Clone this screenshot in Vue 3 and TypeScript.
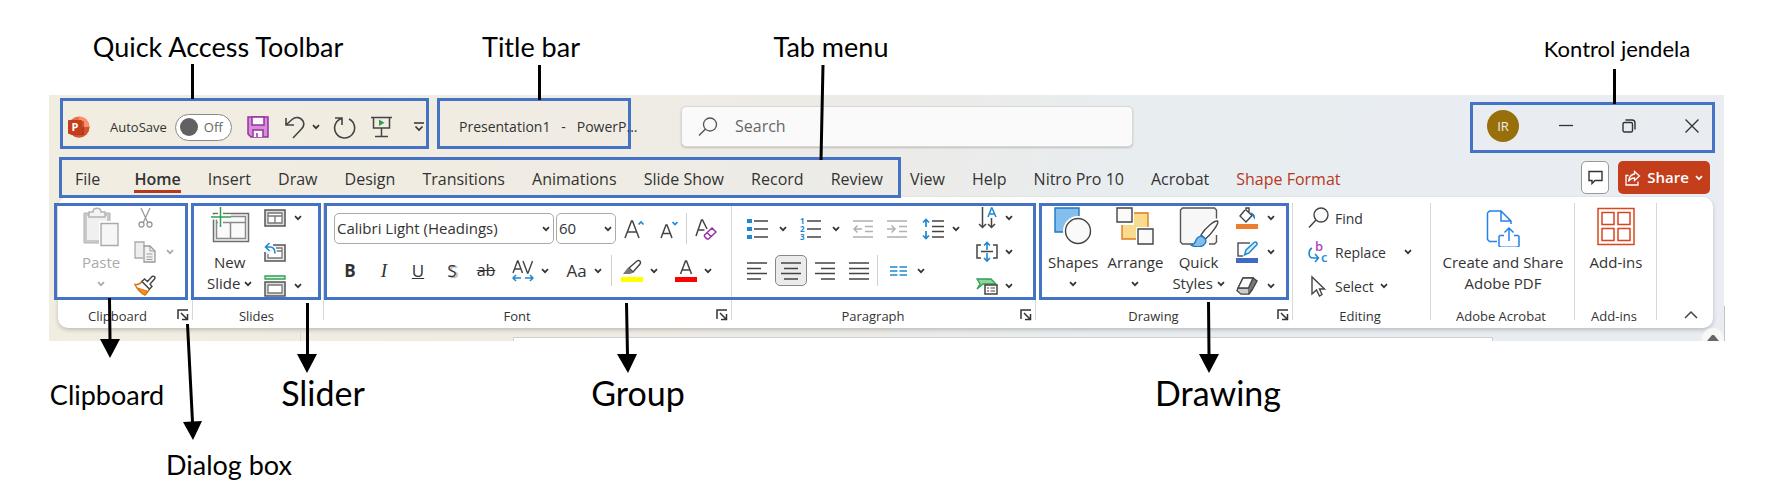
<script setup lang="ts">
import { h, ref } from 'vue'

interface Callout {
  text: string
  x: number
  y: number
  size: 's' | 'm' | 'l'
}

const markedTabs = ['File', 'Home', 'Insert', 'Draw', 'Design', 'Transitions', 'Animations', 'Slide Show', 'Record', 'Review']
const otherTabs = ['View', 'Help', 'Nitro Pro 10', 'Acrobat', 'Shape Format']
const activeTab = ref('Home')

const autoSave = ref(false)
const query = ref('')
const fontName = ref('Calibri Light (Headings)')
const fontSize = ref('60')

const callouts: Callout[] = [
  { text: 'Quick Access Toolbar', x: 218, y: 47, size: 'm' },
  { text: 'Title bar', x: 531, y: 47, size: 'm' },
  { text: 'Tab menu', x: 831, y: 47, size: 'm' },
  { text: 'Kontrol jendela', x: 1617, y: 49, size: 's' },
  { text: 'Clipboard', x: 107, y: 395, size: 'm' },
  { text: 'Slider', x: 323, y: 393, size: 'l' },
  { text: 'Group', x: 638, y: 393, size: 'l' },
  { text: 'Drawing', x: 1218, y: 393, size: 'l' },
  { text: 'Dialog box', x: 229, y: 465, size: 'm' },
]

const Chevron = () =>
  h('svg', { class: 'chev', width: 8, height: 6, viewBox: '0 0 8 6', 'aria-hidden': 'true' }, [
    h('path', { d: 'M1 1.2 4 4.2 7 1.2', fill: 'none', stroke: 'currentColor', 'stroke-width': 1.7 }),
  ])

const Launcher = () =>
  h('button', { class: 'launcher', type: 'button', 'aria-label': 'Dialog box launcher' }, [
    h('svg', { width: 12, height: 12, viewBox: '0 0 12 12' }, [
      h('path', { d: 'M1 10V1h10M4 4l6 6M10.500 5v5.500H5', fill: 'none', stroke: '#333', 'stroke-width': 1.5 }),
    ]),
  ])
</script>

<template>
  <main class="page">
    <section class="window">
      <header class="titlebar">
        <div class="frame qat">
          <svg class="logo" width="22" height="22" viewBox="0 0 22 22" aria-hidden="true">
            <circle cx="11" cy="11" r="10.500" fill="#ed6c47" />
            <path d="M11 .5A10.500 10.500 0 0 1 21.500 11H11z" fill="#ff8f6b" />
            <path d="M.5 11h21a10.500 10.500 0 0 1-21 0z" fill="#d35230" />
            <rect x="2" y="5" width="14" height="14" rx="1" fill="#9a2d14" opacity=".6" />
            <rect x="0" y="4" width="14" height="14" rx="1" fill="#c43e1c" />
            <text x="3.500" y="15" class="logo-letter">P</text>
          </svg>
          <label class="autosave">
            <span>AutoSave</span>
            <span class="toggle">
              <input v-model="autoSave" type="checkbox" />
              <span class="knob"></span>
              <span class="state">Off</span>
            </span>
          </label>
          <button type="button" class="bare save" aria-label="Save">
            <svg width="22" height="22" viewBox="0 0 22 22">
              <path d="M1 1h20v20H4l-3-3z" fill="#d48fd6" stroke="#9a2fa5" stroke-width="1.500" />
              <path d="M5 1h12v8H5zM6 21v-7h10v7" fill="#fafafa" stroke="#9a2fa5" stroke-width="1.500" />
              <path d="M10 17v4" stroke="#9a2fa5" stroke-width="1.500" />
            </svg>
          </button>
          <button type="button" class="bare undo" aria-label="Undo">
            <svg width="22" height="23" viewBox="0 0 22 23">
              <path d="M2 2v7h8M2 9l6-5.500c4-3.500 9-2 11 1.500 1.500 3 .5 6-1.500 8L9 22" fill="none" stroke="#444" stroke-width="1.600" />
            </svg>
            <Chevron />
          </button>
          <button type="button" class="bare redo" aria-label="Repeat">
            <svg width="23" height="23" viewBox="0 0 23 23">
              <path d="M2 2h7v7M8.500 2.500A10 10 0 1 0 16 3" fill="none" stroke="#444" stroke-width="1.600" />
            </svg>
          </button>
          <button type="button" class="bare show" aria-label="Start from beginning">
            <svg width="21" height="22" viewBox="0 0 21 22">
              <path d="M0 1.500h21M2.500 2v10h16V2M10.500 12v8M4 20.500h13" fill="none" stroke="#444" stroke-width="1.500" />
              <path d="M8 3.500v6.500l5.500-3.200z" fill="#2ea052" />
            </svg>
          </button>
          <button type="button" class="bare custom" aria-label="Customize Quick Access Toolbar">
            <svg width="10" height="10" viewBox="0 0 10 10">
              <path d="M0 1h10M1.500 4.500 5 8l3.500-3.500" fill="none" stroke="#333" stroke-width="1.600" />
            </svg>
          </button>
        </div>

        <div class="frame doc-title"><span>Presentation1&nbsp;&nbsp; -&nbsp;&nbsp; PowerP...</span></div>

        <label class="search">
          <svg width="20" height="20" viewBox="0 0 20 20" aria-hidden="true">
            <circle cx="12" cy="7.500" r="6.500" fill="none" stroke="#555" stroke-width="1.300" />
            <path d="M7.500 12 1 18.500" stroke="#555" stroke-width="1.400" />
          </svg>
          <input v-model="query" type="text" placeholder="Search" aria-label="Search" />
        </label>

        <div class="frame controls">
          <button type="button" class="avatar" aria-label="Account">IR</button>
          <button type="button" class="bare" aria-label="Minimize">
            <svg width="14" height="14" viewBox="0 0 14 14"><path d="M0 6.500h14" stroke="#333" stroke-width="1.300" /></svg>
          </button>
          <button type="button" class="bare" aria-label="Restore">
            <svg width="14" height="14" viewBox="0 0 14 14">
              <rect x="1" y="3.500" width="9.500" height="9.500" rx="1.500" fill="none" stroke="#333" stroke-width="1.400" />
              <path d="M3.500 1H10a3 3 0 0 1 3 3v6.500" fill="none" stroke="#333" stroke-width="1.400" />
            </svg>
          </button>
          <button type="button" class="bare" aria-label="Close">
            <svg width="14" height="14" viewBox="0 0 14 14"><path d="M.5.5l13 13M13.500.5l-13 13" stroke="#333" stroke-width="1.400" /></svg>
          </button>
        </div>
      </header>

      <nav class="tabs">
        <div class="frame tabset">
          <button
            v-for="tab in markedTabs"
            :key="tab"
            type="button"
            class="tab"
            :class="{ active: tab === activeTab }"
            @click="activeTab = tab"
          ><span>{{ tab }}</span></button>
        </div>
        <button
          v-for="tab in otherTabs"
          :key="tab"
          type="button"
          class="tab"
          :class="{ active: tab === activeTab, context: tab === 'Shape Format' }"
          @click="activeTab = tab"
        ><span>{{ tab }}</span></button>
        <div class="tab-actions">
          <button type="button" class="comment" aria-label="Comments">
            <svg width="15" height="15" viewBox="0 0 15 15">
              <path d="M1 1.500h13v9H7L4 13.500v-3H1z" fill="none" stroke="#333" stroke-width="1.400" />
            </svg>
          </button>
          <button type="button" class="share">
            <svg width="16" height="16" viewBox="0 0 16 16" aria-hidden="true">
              <path d="M3.500 5.500H1V15h12v-3.500M9.500 1.500 14.500 6l-5 4.500V8C7 8 5 9 3.500 11.500 4 7 6.500 4.500 9.500 4z" fill="none" stroke="#fff" stroke-width="1.300" />
            </svg>
            <span>Share</span>
            <Chevron />
          </button>
        </div>
      </nav>

      <div class="ribbon">
        <section class="group clipboard marked">
          <div class="body">
            <button type="button" class="large off">
              <svg width="38" height="40" viewBox="0 0 38 40" aria-hidden="true">
                <path d="M2 6h26v30H2z" fill="#c9c9c9" stroke="#b3b3b3" />
                <path d="M5 9h20v24H5z" fill="#f0f0f0" />
                <path d="M7 10V5h4c0-5 8-5 8 0h4v5z" fill="#f3f3f3" stroke="#b3b3b3" stroke-width="1.400" />
                <path d="M17 14h20v26H17z" fill="#fff" />
                <path d="M19 16.500h17v22H19z" fill="#f6f6f6" stroke="#aaa" stroke-width="1.400" />
              </svg>
              <span>Paste</span>
              <span><Chevron /></span>
            </button>
            <div class="stack">
              <button type="button" class="item off" aria-label="Cut">
                <svg width="22" height="22" viewBox="0 0 22 22">
                  <path d="M7 1l6.500 14M16 1 9.500 15" fill="none" stroke="#999" stroke-width="1.300" />
                  <circle cx="7.500" cy="17.500" r="2.500" fill="none" stroke="#999" stroke-width="1.300" />
                  <circle cx="15.500" cy="17.500" r="2.500" fill="none" stroke="#999" stroke-width="1.300" />
                </svg>
              </button>
              <button type="button" class="item off" aria-label="Copy">
                <svg width="22" height="22" viewBox="0 0 22 22">
                  <path d="M9 17H1V1h9v4" fill="#eee" stroke="#aaa" stroke-width="1.300" />
                  <path d="M10 5h6l5 5v11H10z" fill="#f3f3f3" stroke="#999" stroke-width="1.300" />
                  <path d="M16 5v5h5M12.500 13h6M12.500 16h6M12.500 18.500h6" fill="none" stroke="#999" />
                </svg>
                <Chevron />
              </button>
              <button type="button" class="item" aria-label="Format Painter">
                <svg width="22" height="22" viewBox="0 0 22 22">
                  <path d="M1 9.500c3 .5 5-.5 7-3L15.500 14c-2 3-3 4.500-4.500 6C7 18 3 14 1 9.500z" fill="#fff" stroke="#d9730d" stroke-width="1.400" />
                  <path d="M3.500 13 13 16c-1 2-1.500 3-2.500 4-3-1.500-5-4-7-7z" fill="#f7941d" stroke="#d9730d" />
                  <path d="M8 6.500 10.500 4l3 2.500L18 1.500c2-1 4 1 2.500 2.500L16 9l2 2.500L15.500 14z" fill="#fff" stroke="#444" stroke-width="1.400" />
                </svg>
              </button>
            </div>
          </div>
          <footer><span>Clipboard</span><Launcher /></footer>
        </section>

        <section class="group slides marked">
          <div class="body">
            <button type="button" class="large">
              <svg width="40" height="40" viewBox="0 0 40 40" aria-hidden="true">
                <path d="M3.500 6.500h35v28h-35z" fill="#f4f4f4" stroke="#6e6e6e" stroke-width="1.500" />
                <path d="M6.500 9.500h29v22h-29zM6.500 15.500h29M20.500 15.500v16" fill="#fafafa" stroke="#8a8a8a" stroke-width="1.500" />
                <path d="M10.500 0v20M1 10h20" stroke="#fff" stroke-width="5" />
                <path d="M10.500 0v20M1 10h20" stroke="#2ea052" stroke-width="1.500" />
              </svg>
              <span>New</span>
              <span>Slide <Chevron /></span>
            </button>
            <div class="stack">
              <button type="button" class="item" aria-label="Layout">
                <svg width="22" height="18" viewBox="0 0 22 18">
                  <path d="M1 1h20v16H1z" fill="#ddd" stroke="#555" stroke-width="1.500" />
                  <path d="M4 4h14v10H4zM4 7h14M11 7v7" fill="#fff" stroke="#777" stroke-width="1.300" />
                </svg>
                <Chevron />
              </button>
              <button type="button" class="item" aria-label="Reset">
                <svg width="22" height="20" viewBox="0 0 22 20">
                  <path d="M9 3h12v16H1v-9" fill="#eee" stroke="#555" stroke-width="1.500" />
                  <path d="M12 6h6v10H4v-4M12 9h6" fill="#fff" stroke="#777" stroke-width="1.300" />
                  <path d="M5.500 1 1.500 5l4 4M2 5h4c4 0 5 3 5 6.500" fill="none" stroke="#fff" stroke-width="4" />
                  <path d="M5.500 1 1.500 5l4 4M2 5h4c4 0 5 3 5 6.500" fill="none" stroke="#1e88d2" stroke-width="1.600" />
                </svg>
              </button>
              <button type="button" class="item" aria-label="Section">
                <svg width="22" height="22" viewBox="0 0 22 22">
                  <path d="M1 1h20v3H1z" fill="#d9f2de" stroke="#2ea052" stroke-width="1.300" />
                  <path d="M1 7h20v14H1z" fill="#ddd" stroke="#555" stroke-width="1.500" />
                  <path d="M4 10h14v8H4z" fill="#fff" stroke="#777" stroke-width="1.300" />
                </svg>
                <Chevron />
              </button>
            </div>
          </div>
          <footer><span>Slides</span></footer>
        </section>

        <div class="span marked">
          <section class="group font">
            <div class="rows">
              <div class="row">
                <span class="combo name">
                  <select v-model="fontName" aria-label="Font"><option>Calibri Light (Headings)</option></select>
                  <Chevron />
                </span>
                <span class="combo size">
                  <select v-model="fontSize" aria-label="Font size"><option>60</option></select>
                  <Chevron />
                </span>
                <button type="button" class="tool" aria-label="Increase Font Size">
                  <svg width="22" height="22" viewBox="0 0 22 22">
                    <path d="M1 20 7.500 3h1L15 20M3.500 14h9" fill="none" stroke="#444" stroke-width="1.500" />
                    <path d="M14.500 6.500l2.500-2.500 2.500 2.500" fill="none" stroke="#1e88d2" stroke-width="1.700" />
                  </svg>
                </button>
                <button type="button" class="tool" aria-label="Decrease Font Size">
                  <svg width="22" height="22" viewBox="0 0 22 22">
                    <path d="M3 20 8 7h1l5 13M5 15.500h7" fill="none" stroke="#444" stroke-width="1.500" />
                    <path d="M14.500 4l2.500 2.500L19.500 4" fill="none" stroke="#1e88d2" stroke-width="1.700" />
                  </svg>
                </button>
                <i class="rule"></i>
                <button type="button" class="tool" aria-label="Clear All Formatting">
                  <svg width="22" height="22" viewBox="0 0 22 22">
                    <path d="M1 18 6.500 2h1l4.500 9M3.500 12h6" fill="none" stroke="#444" stroke-width="1.500" />
                    <path d="M9.500 17l7.500-7 4 4-7.500 7h-1.500L9.500 18.500zM12 14.500l4 4" fill="#fff" stroke="#9a2fa5" stroke-width="1.500" />
                  </svg>
                </button>
              </div>
              <div class="row">
                <button type="button" class="tool letter"><b>B</b></button>
                <button type="button" class="tool letter"><em>I</em></button>
                <button type="button" class="tool letter"><u>U</u></button>
                <button type="button" class="tool letter shadow">S</button>
                <button type="button" class="tool letter"><s>ab</s></button>
                <button type="button" class="tool drop" aria-label="Character Spacing">
                  <svg width="22" height="24" viewBox="0 0 22 24">
                    <path d="M1 14 5.500 2h.5l4.500 12M2.500 10h6.500M11 2l4.500 12h.5L20.500 2" fill="none" stroke="#444" stroke-width="1.400" />
                    <path d="M4 16 1 19l3 3M1 19h8M18 16l3 3-3 3M21 19h-8" fill="none" stroke="#1e88d2" stroke-width="1.500" />
                  </svg>
                  <Chevron />
                </button>
                <button type="button" class="tool drop case"><span>Aa</span><Chevron /></button>
                <i class="rule"></i>
                <button type="button" class="tool drop" aria-label="Text Highlight Color">
                  <svg width="22" height="23" viewBox="0 0 22 23">
                    <path d="M8 9l8-7c2-1.500 4.500.5 3 3l-7 8z" fill="#fff" stroke="#444" stroke-width="1.400" />
                    <path d="M7 8.500l5.500 5L9 15H2z" fill="#777" />
                    <path d="M0 18h22v5H0z" fill="#ff0" />
                  </svg>
                  <Chevron />
                </button>
                <button type="button" class="tool drop" aria-label="Font Color">
                  <svg width="22" height="23" viewBox="0 0 22 23">
                    <path d="M5.500 15 10.500 2h1l5 13M7.500 11h7" fill="none" stroke="#444" stroke-width="1.500" />
                    <path d="M0 18h22v5H0z" fill="#f00" />
                  </svg>
                  <Chevron />
                </button>
              </div>
            </div>
            <footer><span>Font</span><Launcher /></footer>
          </section>

          <section class="group paragraph">
            <div class="body">
              <div class="rows">
                <div class="row">
                  <button type="button" class="tool drop list" aria-label="Bullets">
                    <svg width="22" height="22" viewBox="0 0 22 22">
                      <path d="M0 1h5v4H0zM0 9h5v4H0zM0 17h5v4H0z" fill="#1e88d2" />
                      <path d="M7 3h14M7 11h14M7 19h14" stroke="#444" stroke-width="1.500" />
                    </svg>
                    <Chevron />
                  </button>
                  <button type="button" class="tool drop list" aria-label="Numbering">
                    <svg width="22" height="22" viewBox="0 0 22 22">
                      <text x="0" y="6" class="num">1</text>
                      <text x="0" y="14" class="num">2</text>
                      <text x="0" y="22" class="num">3</text>
                      <path d="M7 3h14M7 11h14M7 19h14" stroke="#444" stroke-width="1.500" />
                    </svg>
                    <Chevron />
                  </button>
                  <button type="button" class="tool" aria-label="Decrease List Level">
                    <svg width="20" height="20" viewBox="0 0 20 20">
                      <path d="M0 2h20M12 7.500h8M12 12.500h8M0 18h20M9 10H1M4.500 6.500 1 10l3.500 3.500" fill="none" stroke="#b0b0b0" stroke-width="1.500" />
                    </svg>
                  </button>
                  <button type="button" class="tool" aria-label="Increase List Level">
                    <svg width="20" height="20" viewBox="0 0 20 20">
                      <path d="M0 2h20M12 7.500h8M12 12.500h8M0 18h20M0 10h8M4.500 6.500 8 10l-3.500 3.500" fill="none" stroke="#b0b0b0" stroke-width="1.500" />
                    </svg>
                  </button>
                  <button type="button" class="tool drop spacing" aria-label="Line Spacing">
                    <svg width="22" height="22" viewBox="0 0 22 22">
                      <path d="M4 1v8M1 4.500l3-3 3 3M4 21v-8M1 17.500l3 3 3-3" fill="none" stroke="#1e88d2" stroke-width="1.700" />
                      <path d="M10 3h12M10 8.500h12M10 13.500h12M10 19h12" stroke="#444" stroke-width="1.500" />
                    </svg>
                    <Chevron />
                  </button>
                </div>
                <div class="row">
                  <button type="button" class="tool" aria-label="Align Left">
                    <svg width="20" height="20" viewBox="0 0 20 20"><path d="M0 2h20M0 7.500h14M0 12.500h20M0 18h14" stroke="#444" stroke-width="1.500" /></svg>
                  </button>
                  <button type="button" class="tool pressed" aria-label="Center" aria-pressed="true">
                    <svg width="20" height="20" viewBox="0 0 20 20"><path d="M0 2h20M3 7.500h14M0 12.500h20M3 18h14" stroke="#444" stroke-width="1.500" /></svg>
                  </button>
                  <button type="button" class="tool" aria-label="Align Right">
                    <svg width="20" height="20" viewBox="0 0 20 20"><path d="M0 2h20M6 7.500h14M0 12.500h20M6 18h14" stroke="#444" stroke-width="1.500" /></svg>
                  </button>
                  <button type="button" class="tool" aria-label="Justify">
                    <svg width="20" height="20" viewBox="0 0 20 20"><path d="M0 2h20M0 7.500h20M0 12.500h20M0 18h20" stroke="#444" stroke-width="1.500" /></svg>
                  </button>
                  <i class="rule"></i>
                  <button type="button" class="tool drop columns" aria-label="Columns">
                    <svg width="17" height="12" viewBox="0 0 17 12"><path d="M0 2h7.500M0 6h7.500M0 10h7.500M9.500 2H17M9.500 6H17M9.500 10H17" stroke="#1e88d2" stroke-width="1.500" /></svg>
                    <Chevron />
                  </button>
                </div>
              </div>
              <div class="stack">
                <button type="button" class="item" aria-label="Text Direction">
                  <svg width="22" height="22" viewBox="0 0 22 22">
                    <path d="M6.500 0v20M3 17l3.500 3.500L10 17M15.500 11v9M12 17l3.500 3.500L19 17" fill="none" stroke="#444" stroke-width="1.500" />
                    <path d="M12 10 15.500 1h.5l4 9M13 7h6" fill="none" stroke="#1e88d2" stroke-width="1.500" />
                  </svg>
                  <Chevron />
                </button>
                <button type="button" class="item" aria-label="Align Text">
                  <svg width="22" height="22" viewBox="0 0 22 22">
                    <path d="M5 4H1v13h4M17 4h4v13h-4M5 10.500h12" fill="none" stroke="#444" stroke-width="1.500" />
                    <path d="M11 9V2M8 4.500l3-3 3 3M11 12v8M8 17l3 3 3-3" fill="none" stroke="#1e88d2" stroke-width="1.600" />
                  </svg>
                  <Chevron />
                </button>
                <button type="button" class="item" aria-label="Convert to SmartArt">
                  <svg width="22" height="20" viewBox="0 0 22 20">
                    <path d="M1 3h14l5 5H7l-6 5 3-5z" fill="#8fd49c" stroke="#2ea052" stroke-width="1.300" />
                    <path d="M9 9h12v9H9z" fill="#fff" stroke="#444" stroke-width="1.500" />
                    <path d="M11 12h2M14.500 12H19M11 15h2M14.500 15H19" stroke="#444" />
                  </svg>
                  <Chevron />
                </button>
              </div>
            </div>
            <footer><span>Paragraph</span><Launcher /></footer>
          </section>
        </div>

        <section class="group drawing marked">
          <div class="body">
            <button type="button" class="large">
              <svg width="38" height="40" viewBox="0 0 38 40" aria-hidden="true">
                <path d="M1 1h24v24H1z" fill="#83beec" stroke="#1e78c2" stroke-width="1.400" />
                <circle cx="24" cy="24" r="15" fill="#fff" />
                <circle cx="24" cy="24" r="12.500" fill="#fafafa" stroke="#444" stroke-width="1.400" />
              </svg>
              <span>Shapes</span>
              <span><Chevron /></span>
            </button>
            <button type="button" class="large">
              <svg width="38" height="40" viewBox="0 0 38 40" aria-hidden="true">
                <path d="M6 6h26v26H6z" fill="#f8db8f" stroke="#e07b1a" stroke-width="1.400" />
                <path d="M0 0h18v18H0zM20 20h18v19H20z" fill="#fff" />
                <path d="M1 1h15v14H1zM22 22h15v15H22z" fill="#fafafa" stroke="#444" stroke-width="1.400" />
              </svg>
              <span>Arrange</span>
              <span><Chevron /></span>
            </button>
            <button type="button" class="large">
              <svg width="40" height="40" viewBox="0 0 40 40" aria-hidden="true">
                <path d="M2 1h35v36H2z" fill="#f7f7f7" />
                <path d="M14 37H3.500L1.500 35V3l2-2h32l2 2v10M37.500 28v7l-2 2H30" fill="none" stroke="#555" stroke-width="1.400" />
                <path d="M22 28C26 21 35 13.500 38.500 14c2 2-6 13-12 18z" fill="#fff" stroke="#fff" stroke-width="5" />
                <path d="M22 28C26 21 35 13.500 38.500 14c2 2-6 13-12 18z" fill="#fff" stroke="#444" stroke-width="1.400" />
                <path d="M12 38c3 0 4-2 5-5 1.500-4 6-5 8.500-2 3 3 .5 7.500-4 8.500-3 .5-7 .5-9.500-1.500z" fill="#83beec" stroke="#1e78c2" stroke-width="1.400" />
              </svg>
              <span>Quick</span>
              <span>Styles <Chevron /></span>
            </button>
            <div class="stack">
              <button type="button" class="item" aria-label="Shape Fill">
                <svg width="22" height="22" viewBox="0 0 22 22">
                  <path d="M9 3 4 9l6 6 6-6.500L10 3V1h3v4" fill="#fff" stroke="#444" stroke-width="1.400" />
                  <path d="M14 5.500c3 0 5.500 2 5 7-1.500-1-1.500-3-3-4z" fill="#1e78c2" />
                  <path d="M0 17h22v5H0z" fill="#ed7d31" />
                </svg>
                <Chevron />
              </button>
              <button type="button" class="item" aria-label="Shape Outline">
                <svg width="22" height="22" viewBox="0 0 22 22">
                  <path d="M14 2H2v13h5" fill="none" stroke="#555" stroke-width="1.500" />
                  <path d="M8.500 14l1.500-5L18 1.500c2-1.500 4 .5 2.500 2.500L13 12z" fill="#d7ebf9" stroke="#1e88d2" stroke-width="1.500" />
                  <path d="M0 17h22v5H0z" fill="#3d6bc6" />
                </svg>
                <Chevron />
              </button>
              <button type="button" class="item" aria-label="Shape Effects">
                <svg width="22" height="20" viewBox="0 0 22 20">
                  <path d="M7 2h10l4 3-5 9-3 4H5l-4-3.500z" fill="#777" stroke="#444" stroke-width="1.400" />
                  <path d="M7 2h10l-4.500 10H2z" fill="#fafafa" stroke="#444" stroke-width="1.400" />
                  <path d="M2 13h10v4.500H5L2 14.500z" fill="#ccc" />
                </svg>
                <Chevron />
              </button>
            </div>
          </div>
          <footer><span>Drawing</span><Launcher /></footer>
        </section>

        <section class="group editing">
          <div class="stack">
            <button type="button" class="item">
              <svg width="21" height="22" viewBox="0 0 21 22" aria-hidden="true">
                <circle cx="13" cy="8" r="7" fill="#fafafa" stroke="#444" stroke-width="1.400" />
                <path d="M8 13 1 20.500" stroke="#444" stroke-width="1.500" />
              </svg>
              <span>Find</span>
            </button>
            <button type="button" class="item">
              <svg width="21" height="22" viewBox="0 0 21 22" aria-hidden="true">
                <text x="7" y="10" class="rep b">b</text>
                <text x="13" y="21" class="rep c">c</text>
                <path d="M4 7C0 9 0 17 5 17h5M7 13l3.500 4L7 21" fill="none" stroke="#1e88d2" stroke-width="1.600" />
              </svg>
              <span class="replace">Replace</span>
              <Chevron />
            </button>
            <button type="button" class="item">
              <svg width="21" height="22" viewBox="0 0 21 22" aria-hidden="true">
                <path d="M4 2v17l4.500-4 3 6 2.500-1.500-2.500-5.500h5z" fill="#fff" stroke="#444" stroke-width="1.400" />
              </svg>
              <span>Select</span>
              <Chevron />
            </button>
          </div>
          <footer><span>Editing</span></footer>
        </section>

        <section class="group acrobat">
          <div class="body">
            <button type="button" class="large">
              <svg width="34" height="40" viewBox="0 0 34 40" aria-hidden="true">
                <path d="M11 34.500H3.500L1.500 32.500V6l2-2H15l10 10v3M15 4v10h10" fill="none" stroke="#2680eb" stroke-width="1.500" />
                <path d="M18 28.500h-4l-1 1V39l1.500 1.200h17L33 39v-9.500l-1-1h-4M23 34V21M18.500 25.500 23 21l4.500 4.500" fill="none" stroke="#2680eb" stroke-width="1.500" />
              </svg>
              <span>Create and Share</span>
              <span>Adobe PDF</span>
            </button>
          </div>
          <footer><span>Adobe Acrobat</span></footer>
        </section>

        <section class="group addins">
          <div class="body">
            <button type="button" class="large">
              <svg width="38" height="40" viewBox="0 0 38 40" aria-hidden="true">
                <path d="M1 1.500h36v36H1z" fill="#fff" stroke="#d9461f" stroke-width="1.500" />
                <path d="M5 5.500h12v12H5zM21 5.500h12v12H21zM5 21.500h12v12H5zM21 21.500h12v12H21z" fill="#fff" stroke="#d9461f" stroke-width="1.500" />
              </svg>
              <span>Add-ins</span>
            </button>
          </div>
          <footer><span>Add-ins</span></footer>
        </section>

        <button type="button" class="collapse" aria-label="Collapse the Ribbon">
          <svg width="14" height="9" viewBox="0 0 14 9"><path d="M1 8l6-6 6 6" fill="none" stroke="#444" stroke-width="1.500" /></svg>
        </button>
      </div>

      <div class="canvas">
        <div class="pane"></div>
        <div class="slide"></div>
        <div class="scroll"><svg width="22" height="13" viewBox="0 0 22 13"><circle cx="11" cy="11" r="11" fill="#f7f7f6" /><path d="M5 13 10 7h2l5 6z" fill="#666" /></svg></div>
      </div>
    </section>

    <svg class="pointers" width="1772" height="501" viewBox="0 0 1772 501" aria-hidden="true">
      <path
        d="M192.500 64v35M539.500 65v35M823 65l-2 95M1614.500 69v35M109.500 298l.5 42M187.500 324l5 98M307.500 303v52M626.500 303l1 52M1208.500 302l.5 53"
        fill="none"
        stroke="#000"
        stroke-width="3"
      />
      <path
        d="M100 339h20l-10 19zM183 422l19-1-9 19zM297 354h20l-10 19zM617 354h20l-9 19zM1199 354h20l-10 19z"
        fill="#000"
      />
    </svg>
    <span
      v-for="note in callouts"
      :key="note.text"
      class="callout"
      :class="note.size"
      :style="{ left: note.x + 'px', top: note.y + 'px' }"
    >{{ note.text }}</span>
  </main>
</template>

<style>
body {
  margin: 0;
  background: #fff;
}
</style>

<style scoped>
* {
  box-sizing: border-box;
}
.page {
  position: relative;
  min-height: 501px;
  padding: 95px 48px 0 49px;
  overflow: hidden;
  color: #333;
  font: 15px/21px 'Open Sans', 'Noto Sans', sans-serif;
}
button,
input,
select {
  margin: 0;
  padding: 0;
  border: 0;
  background: none;
  color: inherit;
  font: inherit;
}
svg {
  display: block;
  flex: none;
}
.chev {
  display: inline-block;
  color: #333;
}
.window {
  padding: 3px 9px 0;
  background: linear-gradient(100deg, #f1ede1 0%, #f0ece3 30%, #ecebe8 50%, #e8edf0 64%, #e9edf2 100%);
}
.frame {
  flex: none;
  display: flex;
  align-items: center;
  border: 3px solid #4472c4;
}

/* title bar */
.titlebar {
  display: flex;
  align-items: flex-start;
  height: 51px;
  margin-left: 2px;
}
.bare {
  display: flex;
  align-items: center;
}
.qat {
  width: 369px;
  height: 51px;
  padding: 7px 0 0 5px;
}
.logo-letter {
  fill: #fff;
  font: 700 11px 'Open Sans', sans-serif;
}
.autosave {
  display: flex;
  align-items: center;
  gap: 8px;
  margin-left: 20px;
  font-size: 13px;
}
.toggle {
  position: relative;
  display: flex;
  align-items: center;
  gap: 6px;
  width: 57px;
  height: 27px;
  padding-left: 4px;
  border: 1px solid #888;
  border-radius: 14px;
  background: #fff;
  color: #666;
}
.toggle input {
  position: absolute;
  inset: 0;
  opacity: 0;
}
.knob {
  width: 18px;
  height: 18px;
  border-radius: 50%;
  background: #616161;
}
.save {
  margin-left: 15px;
}
.undo {
  gap: 6px;
  margin-left: 15px;
}
.redo {
  margin-left: 13px;
}
.show {
  margin-left: 15px;
}
.custom {
  margin-left: 22px;
}
.doc-title {
  width: 194px;
  height: 51px;
  margin-left: 8px;
  padding: 5px 0 0 19px;
  font-size: 14px;
  white-space: nowrap;
}
.search {
  flex: 0 1 452px;
  display: flex;
  align-items: center;
  gap: 17px;
  height: 41px;
  margin: 8px 12px 0 50px;
  padding-left: 16px;
  border: 1px solid #d8d8d6;
  border-radius: 5px;
  background: #fafafa;
  box-shadow: 0 1px 2px #0003;
  font-size: 16px;
}
.search input {
  flex: 1;
  min-width: 0;
  outline: 0;
}
.search input::placeholder {
  color: #666;
  opacity: 1;
}
.controls {
  justify-content: flex-end;
  width: 245px;
  height: 51px;
  margin: 4px 0 0 auto;
  padding: 0 13px 3px 0;
}
.controls .bare {
  margin-left: 49px;
}
.controls .avatar + .bare {
  margin-left: 40px;
}
.avatar {
  width: 32px;
  height: 32px;
  border-radius: 50%;
  background: #986f0b;
  color: #eee;
  font-size: 13px;
}

/* tabs */
.tabs {
  display: flex;
  align-items: center;
  margin: 8px 0 0 1px;
  font-size: 16px;
}
.tabset {
  width: 842px;
  height: 41px;
  justify-content: space-between;
  padding: 0 15px 0 13px;
}
.tab {
  height: 35px;
  white-space: nowrap;
}
.tabset + .tab {
  margin-left: 9px;
}
.tab + .tab {
  margin-left: 27px;
}
.tabset .tab + .tab {
  margin-left: 0;
}
.tabset .tab:first-child {
  margin-right: 7px;
}
.tab span {
  display: block;
  padding: 6px 0 0;
  border-bottom: 3px solid transparent;
}
.active span {
  border-color: #b7381a;
  font-weight: 600;
}
.context {
  color: #b7381a;
}
.tab-actions {
  display: flex;
  gap: 9px;
  margin: 0 5px 0 auto;
}
.comment,
.share {
  display: flex;
  align-items: center;
  justify-content: center;
  height: 33px;
  border-radius: 5px;
}
.comment {
  width: 28px;
  border: 1px solid #999;
  background: #fff;
}
.share {
  gap: 6px;
  width: 92px;
  background: #c43e1c;
  color: #fff;
  font-weight: 600;
  font-size: 15px;
}
.share .chev {
  color: #fff;
}

/* ribbon */
.ribbon {
  display: flex;
  margin: -1px 2px 0 0;
  border-radius: 10px;
  background: #fff;
  box-shadow: 0 2px 4px #0003;
}
.marked {
  position: relative;
}
.marked::after {
  content: '';
  position: absolute;
  inset: 6px 3px 28px 1px;
  border: 3px solid #4472c4;
  pointer-events: none;
}
.span {
  display: flex;
}
.span::after {
  left: 0;
  right: 0;
}
.group {
  flex: none;
  display: flex;
  flex-direction: column;
  height: 131px;
  padding-top: 4px;
  background: linear-gradient(#d8d8d8, #d8d8d8) right 6px / 1px 117px no-repeat;
}
.body {
  display: flex;
  height: 102px;
}
.group footer {
  display: flex;
  align-items: center;
  height: 22px;
  margin: auto 0 1px;
  padding-right: 4px;
  font-size: 13px;
}
.group footer span {
  flex: 1;
  text-align: center;
}
.span footer span,
.drawing footer span {
  padding-right: 6px;
}
.launcher {
  margin-top: 1px;
}
.large {
  display: flex;
  flex-direction: column;
  align-items: center;
  padding-top: 6px;
  line-height: 21px;
  white-space: nowrap;
}
.large svg:first-child {
  margin-bottom: 5px;
}
.large span {
  height: 21px;
}
.large span .chev {
  margin: 0 0 2px;
}
.off,
.off .chev {
  color: #aaa;
}
.stack {
  display: flex;
  flex-direction: column;
}
.item {
  display: flex;
  align-items: center;
  gap: 8px;
  height: 34px;
}
.rows {
  display: flex;
  flex-direction: column;
  gap: 11px;
  height: 102px;
  padding-top: 12px;
}
.row {
  display: flex;
  align-items: center;
  height: 31px;
}
.tool {
  flex: none;
  display: flex;
  align-items: center;
  justify-content: center;
  width: 34px;
  height: 31px;
}
.drop {
  width: 53px;
  gap: 7px;
}
.pressed {
  width: 32px;
  margin: 0 1px;
  border: 1px solid #888;
  border-radius: 5px;
  background: #ebebeb;
}
.rule {
  width: 1px;
  height: 31px;
  background: #d0d0d0;
}

.clipboard {
  width: 135px;
}
.clipboard::after {
  left: -4px;
  right: 5px;
}
.clipboard .large {
  margin-left: 24px;
}
.clipboard .stack {
  margin-left: 14px;
}
.clipboard .item {
  gap: 10px;
}
.slides {
  width: 131px;
}
.slides::after {
  left: -2px;
}
.slides .large {
  margin-left: 14px;
}
.slides .stack {
  margin-left: 12px;
}
.font {
  width: 408px;
}
.font .rows {
  padding-left: 10px;
}
.combo {
  position: relative;
  display: flex;
  height: 31px;
  border: 1px solid #aaa;
  border-radius: 5px;
}
.combo select {
  width: 100%;
  padding-left: 2px;
  appearance: none;
  outline: 0;
}
.combo .chev {
  position: absolute;
  right: 3px;
  top: 12px;
  pointer-events: none;
}
.name {
  width: 220px;
}
.size {
  width: 60px;
  margin: 0 2px;
}
.font .row:first-child .rule {
  margin-right: 2px;
}
.font .row + .row {
  margin-left: -1px;
}
.letter {
  font-size: 17px;
}
.letter em {
  font-family: 'Liberation Serif', serif;
  font-size: 19px;
}
.letter s {
  font-size: 16px;
}
.shadow {
  text-shadow: 2px 1px 1px #aaa;
}
.font .drop {
  gap: 7px;
  width: 54px;
}
.case {
  font-size: 17px;
}
.paragraph {
  width: 304px;
}
.paragraph .rows {
  padding-left: 8px;
}
.paragraph .rule {
  margin: 0 3px 0 1px;
}
.list {
  gap: 10px;
}
.spacing {
  gap: 8px;
}
.columns {
  gap: 10px;
}
.paragraph .stack {
  margin-left: 9px;
}
.paragraph .item {
  gap: 7px;
}
.drawing {
  width: 257px;
}
.drawing::after {
  left: 3px;
  right: 4px;
}
.drawing .large {
  margin-left: 12px;
}
.drawing .large + .large {
  margin-left: 9px;
}
.drawing .stack {
  margin-left: 11px;
}
.drawing .item {
  gap: 9px;
}
.editing {
  width: 138px;
}
.editing .stack {
  height: 102px;
  padding-left: 15px;
  font-size: 14px;
}
.editing .item {
  gap: 6px;
}
.item .replace {
  margin-right: 12px;
}
.rep {
  font: 600 13px 'Open Sans', sans-serif;
}
.b {
  fill: #b146c2;
}
.c {
  fill: #1e88d2;
}
.num {
  fill: #1e88d2;
  font: 700 8px 'Open Sans', sans-serif;
}
.acrobat {
  width: 144px;
}
.acrobat .large,
.addins .large {
  flex: 1;
}
.addins {
  width: 82px;
}
.collapse {
  align-self: flex-end;
  margin: 0 15px 9px auto;
}

/* document area */
.canvas {
  position: relative;
  display: flex;
  align-items: flex-end;
  height: 13px;
  margin-right: -9px;
}
.canvas::after {
  content: '';
  position: absolute;
  right: -1px;
  bottom: 0;
  width: 1px;
  height: 35px;
  background: #c4c4c4;
}
.pane {
  flex: none;
  width: 243px;
  height: 11px;
  border-right: 1px solid #dedad0;
}
.slide {
  flex: 1;
  height: 4px;
  margin: 0 231px 0 212px;
  border: 1px solid #cfcfcc;
  border-bottom: 0;
  background: #fff;
}
.scroll {
  position: absolute;
  right: 0;
  top: 0;
}

/* annotations laid over the window */
.pointers {
  position: absolute;
  left: 0;
  top: 0;
  pointer-events: none;
}
.callout {
  position: absolute;
  transform: translate(-50%, -50%);
  color: #000;
  font-family: Lato, 'Open Sans', sans-serif;
  line-height: 36px;
  white-space: nowrap;
}
.s {
  font-size: 22px;
}
.m {
  font-size: 27px;
}
.l {
  font-size: 34px;
}
</style>
